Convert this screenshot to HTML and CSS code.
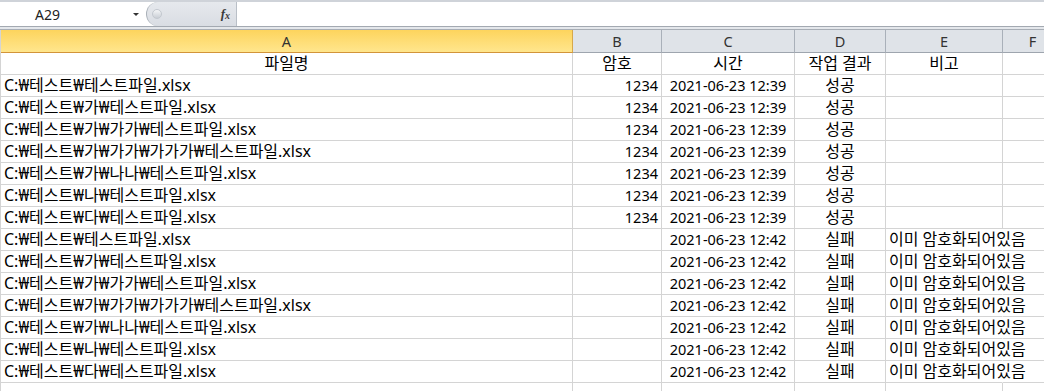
FILE: index.html
```html
<!DOCTYPE html>
<html lang="ko">
<head>
    <meta charset="UTF-8">
    <title>Excel - 암호화 결과</title>
    <link rel="stylesheet" href="styles.css">
</head>
<body>
    <div class="formula-bar">
        <div class="name-box">
            <span class="cell-ref">A29</span>
            <span class="drop-arrow"></span>
        </div>
        <div class="fx-pill">
            <span class="knob"></span>
            <span class="fx">f<sub>x</sub></span>
        </div>
        <div class="formula-input"></div>
    </div>
    <div class="bar-gap"></div>

    <div class="sheet">
        <div class="col-head selected">A</div>
        <div class="col-head">B</div>
        <div class="col-head">C</div>
        <div class="col-head">D</div>
        <div class="col-head">E</div>
        <div class="col-head">F</div>

        <div class="cell center">파일명</div>
        <div class="cell center">암호</div>
        <div class="cell center">시간</div>
        <div class="cell center">작업 결과</div>
        <div class="cell center">비고</div>
        <div class="cell"></div>

        <div class="cell">C:₩테스트₩테스트파일.xlsx</div>
        <div class="cell num right">1234</div>
        <div class="cell num center">2021-06-23 12:39</div>
        <div class="cell center">성공</div>
        <div class="cell"></div>
        <div class="cell"></div>

        <div class="cell">C:₩테스트₩가₩테스트파일.xlsx</div>
        <div class="cell num right">1234</div>
        <div class="cell num center">2021-06-23 12:39</div>
        <div class="cell center">성공</div>
        <div class="cell"></div>
        <div class="cell"></div>

        <div class="cell">C:₩테스트₩가₩가가₩테스트파일.xlsx</div>
        <div class="cell num right">1234</div>
        <div class="cell num center">2021-06-23 12:39</div>
        <div class="cell center">성공</div>
        <div class="cell"></div>
        <div class="cell"></div>

        <div class="cell">C:₩테스트₩가₩가가₩가가가₩테스트파일.xlsx</div>
        <div class="cell num right">1234</div>
        <div class="cell num center">2021-06-23 12:39</div>
        <div class="cell center">성공</div>
        <div class="cell"></div>
        <div class="cell"></div>

        <div class="cell">C:₩테스트₩가₩나나₩테스트파일.xlsx</div>
        <div class="cell num right">1234</div>
        <div class="cell num center">2021-06-23 12:39</div>
        <div class="cell center">성공</div>
        <div class="cell"></div>
        <div class="cell"></div>

        <div class="cell">C:₩테스트₩나₩테스트파일.xlsx</div>
        <div class="cell num right">1234</div>
        <div class="cell num center">2021-06-23 12:39</div>
        <div class="cell center">성공</div>
        <div class="cell"></div>
        <div class="cell"></div>

        <div class="cell">C:₩테스트₩다₩테스트파일.xlsx</div>
        <div class="cell num right">1234</div>
        <div class="cell num center">2021-06-23 12:39</div>
        <div class="cell center">성공</div>
        <div class="cell"></div>
        <div class="cell"></div>

        <div class="cell">C:₩테스트₩테스트파일.xlsx</div>
        <div class="cell num right"></div>
        <div class="cell num center">2021-06-23 12:42</div>
        <div class="cell center">실패</div>
        <div class="cell spill">이미 암호화되어있음</div>
        <div class="cell"></div>

        <div class="cell">C:₩테스트₩가₩테스트파일.xlsx</div>
        <div class="cell num right"></div>
        <div class="cell num center">2021-06-23 12:42</div>
        <div class="cell center">실패</div>
        <div class="cell spill">이미 암호화되어있음</div>
        <div class="cell"></div>

        <div class="cell">C:₩테스트₩가₩가가₩테스트파일.xlsx</div>
        <div class="cell num right"></div>
        <div class="cell num center">2021-06-23 12:42</div>
        <div class="cell center">실패</div>
        <div class="cell spill">이미 암호화되어있음</div>
        <div class="cell"></div>

        <div class="cell">C:₩테스트₩가₩가가₩가가가₩테스트파일.xlsx</div>
        <div class="cell num right"></div>
        <div class="cell num center">2021-06-23 12:42</div>
        <div class="cell center">실패</div>
        <div class="cell spill">이미 암호화되어있음</div>
        <div class="cell"></div>

        <div class="cell">C:₩테스트₩가₩나나₩테스트파일.xlsx</div>
        <div class="cell num right"></div>
        <div class="cell num center">2021-06-23 12:42</div>
        <div class="cell center">실패</div>
        <div class="cell spill">이미 암호화되어있음</div>
        <div class="cell"></div>

        <div class="cell">C:₩테스트₩나₩테스트파일.xlsx</div>
        <div class="cell num right"></div>
        <div class="cell num center">2021-06-23 12:42</div>
        <div class="cell center">실패</div>
        <div class="cell spill">이미 암호화되어있음</div>
        <div class="cell"></div>

        <div class="cell">C:₩테스트₩다₩테스트파일.xlsx</div>
        <div class="cell num right"></div>
        <div class="cell num center">2021-06-23 12:42</div>
        <div class="cell center">실패</div>
        <div class="cell spill">이미 암호화되어있음</div>
        <div class="cell"></div>

        <div class="cell"></div>
        <div class="cell"></div>
        <div class="cell"></div>
        <div class="cell"></div>
        <div class="cell"></div>
        <div class="cell"></div>
    </div>
</body>
</html>
```

FILE: styles.css
```css
body {
    margin: 0;
    background: white;
    font-family: 'Noto Sans CJK KR', 'Noto Sans', sans-serif;
    color: #000;
    overflow: hidden;
}

.formula-bar {
    display: flex;
    height: 24px;
    border-top: 2px solid #cfd3d9;
    border-bottom: 1px solid #a3a9b1;
    background: white;
}

.name-box {
    width: 146px;
    display: flex;
    align-items: center;
    position: relative;
}

.cell-ref {
    margin-left: 35px;
    font-family: 'Noto Sans', 'Liberation Sans', sans-serif;
    font-size: 14px;
    color: #222;
}

.drop-arrow {
    position: absolute;
    left: 133px;
    top: 11px;
    border-left: 3px solid transparent;
    border-right: 3px solid transparent;
    border-top: 3px solid #333;
}

.fx-pill {
    width: 91px;
    background: linear-gradient(#e6e9ed, #d9dde3);
    border-left: 1px solid #a9b0b8;
    border-right: 1px solid #b9bfc7;
    border-radius: 12px 0 0 12px;
    display: flex;
    align-items: center;
    justify-content: space-between;
    box-sizing: border-box;
    padding: 0 6px 0 5px;
}

.knob {
    width: 8px;
    height: 8px;
    border-radius: 50%;
    background: linear-gradient(#f4f5f7, #c9ced5);
    border: 1px solid #c3c8cf;
}

.fx {
    font-family: 'Liberation Serif', serif;
    font-style: italic;
    font-weight: bold;
    font-size: 13px;
    color: #3a3a3a;
}

.fx sub {
    font-size: 10px;
    vertical-align: -1px;
}

.formula-input {
    flex: 1;
}

.bar-gap {
    height: 2px;
    background: #e4e7eb;
    border-bottom: 1px solid #a8aeb6;
}

.sheet {
    display: grid;
    grid-template-columns: 572px 89px 133px 91px 117px 60px;
    grid-template-rows: 23px;
    grid-auto-rows: 22px;
    border-left: 1px solid #d4d4d4;
    font-family: 'Noto Sans', 'Noto Sans CJK KR', sans-serif;
    font-size: 16px;
    line-height: 21px;
}

.col-head {
    line-height: 22px;
    text-align: center;
    background: #dfe3e8;
    border-right: 1px solid #a9b0b9;
    border-bottom: 1px solid #9ea5ae;
    font-size: 14.5px;
    color: #333;
}

.col-head.selected {
    background: linear-gradient(#fdd45d, #ffe68d);
    border-right-color: #d7a84a;
    border-bottom-color: #d2943a;
}

.cell {
    border-right: 1px solid #d4d4d4;
    border-bottom: 1px solid #d4d4d4;
    padding: 0 3px;
    white-space: nowrap;
    overflow: visible;
}

.num {
    font-size: 14.5px;
}

.center {
    text-align: center;
}

.right {
    text-align: right;
}

.spill {
    border-right-color: transparent;
}
```
